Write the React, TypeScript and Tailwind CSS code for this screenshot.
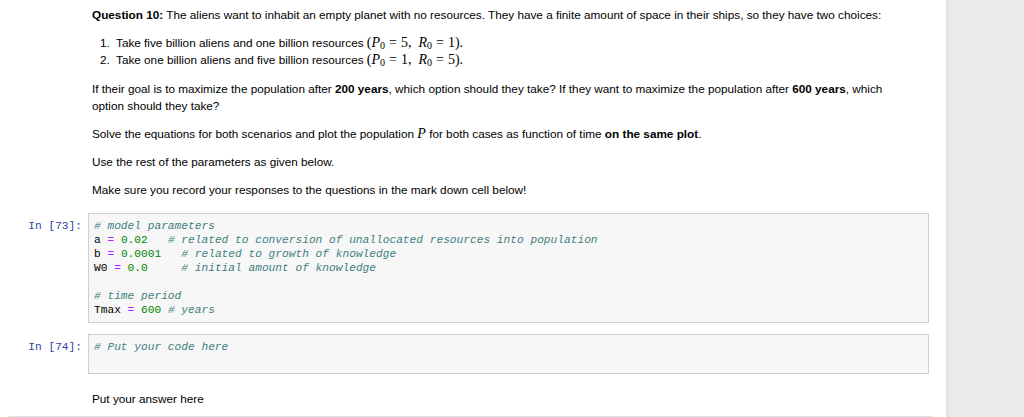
import React from "react";

const sans = { fontFamily: '"Liberation Sans", Arial, sans-serif' };
const mono = { fontFamily: '"Liberation Mono", "Courier New", monospace' };
const serif = { fontFamily: '"Liberation Serif", "Times New Roman", serif' };

function M({ children }: { children: React.ReactNode }) {
  return (
    <span style={serif} className="text-[14px] leading-none">
      {children}
    </span>
  );
}

function Sub0({ v }: { v: string }) {
  return (
    <>
      <i>{v}</i>
      <span className="text-[10px] leading-none relative top-[2px]">0</span>
    </>
  );
}

const Eq = () => <span className="mx-[4px]">=</span>;

const Cm = ({ t }: { t: string }) => <span className="italic text-[#408080]">{t}</span>;
const Op = () => <span className="text-[#aa22ff]">=</span>;
const Nm = ({ t }: { t: string }) => <span className="text-[#008800]">{t}</span>;

function Prompt({ n }: { n: number }) {
  return (
    <div
      style={mono}
      className="w-[88px] shrink-0 text-right pr-[6px] pt-[6px] text-[11.2px] leading-[14px] text-[#303f9f] whitespace-pre"
    >
      {`In [${n}]:`}
    </div>
  );
}

export default function App() {
  return (
    <div style={sans} className="flex w-[1024px] h-[417px] overflow-hidden bg-white text-black">
      <div className="w-[946px] shrink-0 flex flex-col">
        {/* markdown cell */}
        <div className="flex pt-[6px]">
          <div className="w-[88px] shrink-0" />
          <div className="w-[841px] pl-[4px] text-[11.75px] leading-[17px] flex flex-col gap-[11.25px]">
            <p>
              <b>Question 10:</b> The aliens want to inhabit an empty planet with no resources. They have a finite amount
              of space in their ships, so they have two choices:
            </p>
            <div className="pl-[8px]">
              <div className="flex h-[17px]">
                <span className="w-[16px] shrink-0">1.</span>
                <span>
                  Take five billion aliens and one billion resources{" "}
                  <M>
                    (<Sub0 v="P" />
                    <Eq />
                    5,&nbsp;&nbsp;<Sub0 v="R" />
                    <Eq />
                    1).
                  </M>
                </span>
              </div>
              <div className="flex h-[17px]">
                <span className="w-[16px] shrink-0">2.</span>
                <span>
                  Take one billion aliens and five billion resources{" "}
                  <M>
                    (<Sub0 v="P" />
                    <Eq />
                    1,&nbsp;&nbsp;<Sub0 v="R" />
                    <Eq />
                    5).
                  </M>
                </span>
              </div>
            </div>
            <p className="pr-[30px]">
              If their goal is to maximize the population after <b>200 years</b>, which option should they take? If they
              want to maximize the population after <b>600 years</b>, which option should they take?
            </p>
            <p className="h-[17px]">
              Solve the equations for both scenarios and plot the population{" "}
              <M>
                <i>P</i>
              </M>{" "}
              for both cases as function of time <b>on the same plot</b>.
            </p>
            <p>Use the rest of the parameters as given below.</p>
            <p>Make sure you record your responses to the questions in the mark down cell below!</p>
          </div>
        </div>

        {/* code cell 73 */}
        <div className="flex mt-[15px]">
          <Prompt n={73} />
          <div
            style={mono}
            className="w-[841px] border border-[#cfcfcf] bg-[#f7f7f7] px-[5px] py-[5px] text-[11.2px] leading-[14px] whitespace-pre"
          >
            <div>
              <Cm t="# model parameters" />
            </div>
            <div>
              a <Op /> <Nm t="0.02" />
              {"   "}
              <Cm t="# related to conversion of unallocated resources into population" />
            </div>
            <div>
              b <Op /> <Nm t="0.0001" />
              {"   "}
              <Cm t="# related to growth of knowledge" />
            </div>
            <div>
              W0 <Op /> <Nm t="0.0" />
              {"     "}
              <Cm t="# initial amount of knowledge" />
            </div>
            <div>{" "}</div>
            <div>
              <Cm t="# time period" />
            </div>
            <div>
              Tmax <Op /> <Nm t="600" /> <Cm t="# years" />
            </div>
          </div>
        </div>

        {/* code cell 74 */}
        <div className="flex mt-[10.5px]">
          <Prompt n={74} />
          <div
            style={mono}
            className="w-[841px] border border-[#cfcfcf] bg-[#f7f7f7] px-[5px] py-[5px] text-[11.2px] leading-[14px] whitespace-pre"
          >
            <div>
              <Cm t="# Put your code here" />
            </div>
            <div>{" "}</div>
          </div>
        </div>

        {/* answer markdown */}
        <div className="flex mt-[16px]">
          <div className="w-[88px] shrink-0" />
          <div className="pl-[4px] text-[11.75px] leading-[17px]">Put your answer here</div>
        </div>

        <div className="mt-[9px] ml-[9px] w-[924px] h-[1px] shrink-0 bg-[#dde5ec]" />
      </div>
      <div className="flex-1 bg-[#eaeaea] shadow-[inset_4px_0_4px_-2px_rgba(0,0,0,0.05)]" />
    </div>
  );
}
